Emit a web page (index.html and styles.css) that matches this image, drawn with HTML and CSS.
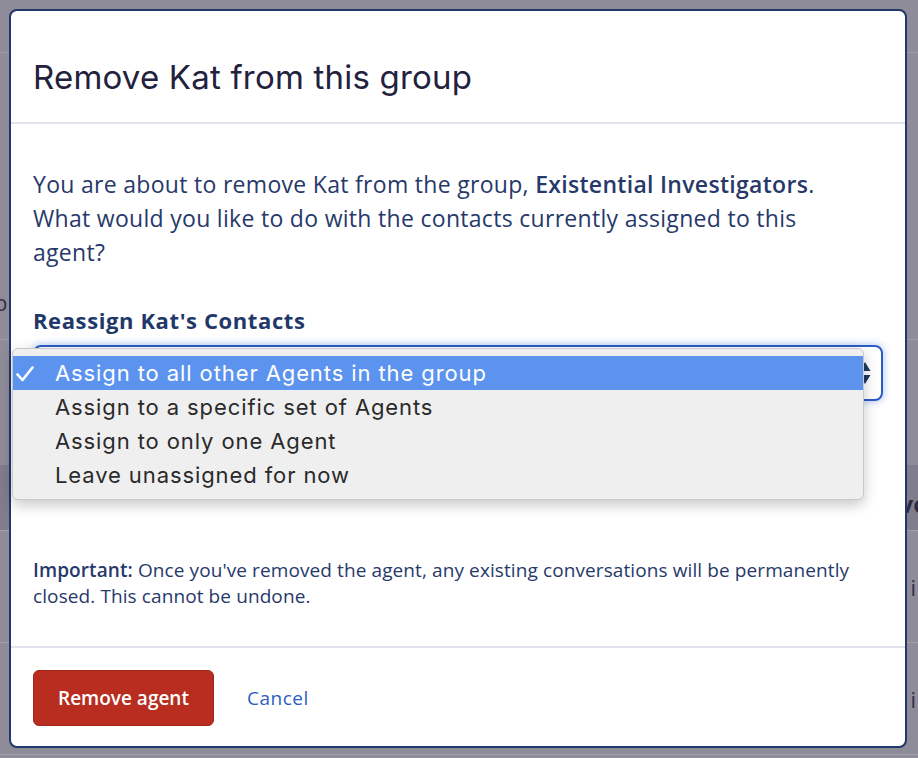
FILE: index.html
```html
<!DOCTYPE html>
<html lang="en">
<head>
    <meta charset="UTF-8">
    <meta name="viewport" content="width=device-width, initial-scale=1.0">
    <title>Remove Kat from this group</title>
    <link rel="stylesheet" href="styles.css">
</head>
<body>
    <!-- page behind the dimmed overlay -->
    <div class="page">
        <div class="page-top"></div>
        <div class="page-gap"></div>
        <div class="page-row page-row-text"><span>p</span></div>
        <div class="page-gap page-gap-mid"></div>
        <div class="page-head"><span class="page-head-right">vo</span></div>
        <div class="page-row page-row-item"><span class="page-item">i</span></div>
        <div class="page-row page-row-item"><span class="page-item">i</span></div>
    </div>

    <div class="overlay">
        <div class="modal">
            <div class="modal-header">
                <h1 class="modal-title">Remove Kat from this group</h1>
            </div>

            <div class="modal-body">
                <p class="intro">You are about to remove Kat from the group, <strong>Existential Investigators</strong>. What would you like to do with the contacts currently assigned to this agent?</p>

                <label class="field-label">Reassign Kat's Contacts</label>
                <div class="select">
                    <span class="select-value">Assign to all other Agents in the group</span>
                    <svg class="select-arrows" width="12" height="26" viewBox="0 0 12 26">
                        <path d="M6 2 L11.5 11 H0.5 Z" fill="#1f3961"/>
                        <path d="M6 24 L11.5 15 H0.5 Z" fill="#1f3961"/>
                    </svg>

                    <ul class="select-menu">
                        <li class="option selected">
                            <svg class="check" width="18" height="16" viewBox="0 0 18 16">
                                <path d="M1.5 8.5 L6.5 14 L16.5 1.5" fill="none" stroke="#fff" stroke-width="2.6" stroke-linecap="round" stroke-linejoin="round"/>
                            </svg>
                            Assign to all other Agents in the group
                        </li>
                        <li class="option">Assign to a specific set of Agents</li>
                        <li class="option">Assign to only one Agent</li>
                        <li class="option">Leave unassigned for now</li>
                    </ul>
                </div>

                <p class="note"><strong>Important:</strong> Once you've removed the agent, any existing conversations will be permanently closed. This cannot be undone.</p>
            </div>

            <div class="modal-footer">
                <button class="btn-danger">Remove agent</button>
                <a class="link" href="#">Cancel</a>
            </div>
        </div>
    </div>
</body>
</html>
```

FILE: styles.css
```css
body {
    margin: 0;
    height: 758px;
    overflow: hidden;
    background: #8e8c99;
    font-family: "Open Sans", "Noto Sans", sans-serif;
}

/* dimmed page */
.page {
    display: flex;
    flex-direction: column;
}
.page-top {
    height: 52px;
    border-bottom: 1px solid #a09fa9;
}
.page-gap {
    height: 228px;
}
.page-gap-mid {
    height: 125px;
}
.page-row {
    height: 58px;
    border-bottom: 1px solid #a09fa9;
    color: #34324a;
    font-size: 22px;
}
.page-row-text span {
    display: block;
    margin-left: -6px;
    padding-top: 6px;
}
.page-head {
    height: 66px;
    background: #807e8c;
    border-bottom: 1px solid #a09fa9;
    color: #2d2b44;
    font-size: 24px;
    font-weight: 700;
    display: flex;
    justify-content: flex-end;
    align-items: flex-end;
    padding-bottom: 10px;
    box-sizing: border-box;
}
.page-head-right {
    margin-right: -10px;
}
.page-row-item {
    height: 111px;
    display: flex;
    justify-content: flex-end;
    align-items: center;
}
.page-item {
    margin-right: 2px;
}

/* modal */
.overlay {
    position: fixed;
    inset: 0;
    padding: 9px 11px 10px 9px;
    box-sizing: border-box;
    display: flex;
}
.modal {
    flex: 1;
    background: #fff;
    border: 2px solid #22386a;
    border-radius: 8px;
    display: flex;
    flex-direction: column;
}
.modal-header {
    padding: 46px 22px 25px;
    border-bottom: 2px solid #dfe2eb;
}
.modal-title {
    margin: 0;
    font-family: Inter, "Liberation Sans", sans-serif;
    font-weight: 400;
    font-size: 33px;
    line-height: 40px;
    letter-spacing: 0.2px;
    color: #23213d;
}
.modal-body {
    padding: 43px 22px 37px;
    border-bottom: 2px solid #dfe2eb;
    color: #27396a;
}
.intro {
    margin: 0;
    max-width: 830px;
    font-size: 23px;
    line-height: 34px;
    letter-spacing: 0.3px;
}
.intro strong {
    font-weight: 600;
}
.field-label {
    display: block;
    margin-top: 37px;
    font-size: 22px;
    line-height: 28px;
    font-weight: 700;
    letter-spacing: 0.6px;
    color: #22386a;
}

/* select with its native-looking popup */
.select {
    position: relative;
    margin-top: 11px;
    height: 56px;
    border: 2px solid #2a5cc6;
    border-radius: 8px;
    box-shadow: 0 0 6px 2px rgba(70, 120, 230, 0.3);
    box-sizing: border-box;
    display: flex;
    align-items: center;
    padding: 0 10px 0 20px;
}
.select-value {
    flex: 1;
    font-size: 21px;
    color: #22386a;
}
.select-arrows {
    display: block;
}
.select-menu {
    position: absolute;
    top: 1px;
    left: -23px;
    width: 852px;
    margin: 0;
    padding: 7px 0;
    list-style: none;
    background: #efeff0;
    border: 1px solid #c9c9cd;
    border-radius: 6px;
    box-shadow: 0 5px 14px rgba(0, 0, 0, 0.22);
    box-sizing: border-box;
    font-family: Inter, "Liberation Sans", sans-serif;
    font-size: 22px;
    letter-spacing: 0.9px;
    color: #2a2a2a;
}
.option {
    position: relative;
    height: 34px;
    line-height: 34px;
    padding-left: 42px;
}
.option.selected {
    background: #5b93ee;
    color: #fff;
}
.check {
    position: absolute;
    left: 3px;
    top: 10px;
}

.note {
    margin: 156px 0 0;
    font-size: 19px;
    line-height: 26px;
    letter-spacing: 0.1px;
}
.note strong {
    font-weight: 600;
}

/* footer */
.modal-footer {
    padding: 22px 22px 20px;
    display: flex;
    align-items: center;
    gap: 33px;
}
.btn-danger {
    width: 181px;
    height: 56px;
    background: #b82d1f;
    border: 1px solid #a0271a;
    border-radius: 6px;
    color: #fff;
    font-family: "Open Sans", "Noto Sans", sans-serif;
    font-size: 19px;
    font-weight: 600;
    cursor: pointer;
}
.link {
    color: #2d5ec0;
    font-size: 19px;
    letter-spacing: 0.5px;
    text-decoration: none;
}
```
